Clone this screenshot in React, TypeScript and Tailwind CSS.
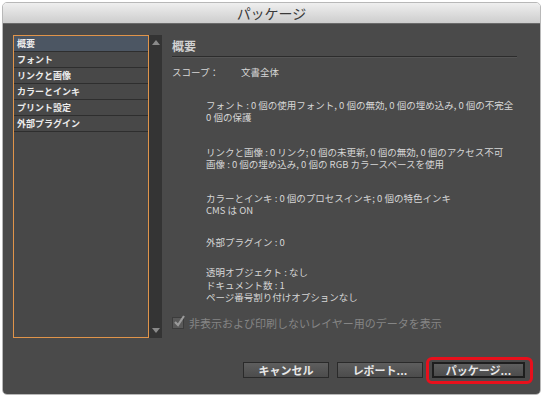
const jp = { fontFamily: '"Noto Sans CJK JP", "Liberation Sans", sans-serif' };

const items = ["概要", "フォント", "リンクと画像", "カラーとインキ", "プリント設定", "外部プラグイン"];

function Btn({ label, primary }: { label: string; primary?: boolean }) {
  return (
    <div
      className={
        "flex h-[16px] items-center justify-center bg-gradient-to-b from-[#5e5e5e] to-[#4c4c4c] text-[11px] font-bold leading-none text-[#e8e8e8] " +
        (primary ? "w-[93px] border-2 border-[#1e1e1e]" : "w-[86px] border border-[#2a2a2a]")
      }
    >
      {label}
    </div>
  );
}

export default function App() {
  return (
    <div className="h-[398px] w-[545px] bg-white p-[2px] pr-[4px] pb-[3px]" style={jp}>
      <div className="flex h-full w-full flex-col overflow-hidden rounded-[5px] border border-[#b8b8b8]">
        <div className="flex h-[21px] shrink-0 items-center justify-center border-b border-[#6a6a6a] bg-gradient-to-b from-[#efefef] to-[#cdcdcd] text-[14px] text-[#3a3a3a]">
          パッケージ
        </div>
        <div className="flex flex-1 flex-col bg-[#4a4a4a] pl-[10px] pt-[11px]">
          <div className="flex h-[303px]">
            <div className="flex w-[136px] flex-col border border-[#e0944a] bg-[#484848]">
              {items.map((t, i) => (
                <div
                  key={t}
                  className={
                    "h-[16px] border-b border-[#2e2e2e] pl-[3px] text-[9px] font-bold leading-[15px] text-[#ececec] " +
                    (i === 0 ? "bg-[#4c5663]" : "")
                  }
                >
                  {t}
                </div>
              ))}
            </div>
            <div className="flex w-[13px] flex-col items-center justify-between bg-[#343434] py-[5px]">
              <div className="h-0 w-0 border-x-[4px] border-b-[5px] border-x-transparent border-b-[#8a8a8a]" />
              <div className="h-0 w-0 border-x-[4px] border-t-[5px] border-x-transparent border-t-[#8a8a8a]" />
            </div>
            <div className="flex w-[355px] flex-col whitespace-nowrap pl-[10px] text-[9.5px] leading-[12.5px] text-[#d6d6d6]">
              <div className="pt-[3px] text-[12px] font-bold leading-[16px] text-[#d0d0d0]">概要</div>
              <div className="mt-[2px] h-[2px] border-t border-[#2c2c2c] border-b border-b-[#555]" />
              <div className="mt-[8px] flex">
                <span className="w-[69px]">スコープ：</span>
                <span>文書全体</span>
              </div>
              <div className="ml-[34px] mt-[20px]">
                <div>フォント : 0 個の使用フォント, 0 個の無効, 0 個の埋め込み, 0 個の不完全</div>
                <div>0 個の保護</div>
              </div>
              <div className="ml-[34px] mt-[22px]">
                <div>リンクと画像 : 0 リンク; 0 個の未更新, 0 個の無効, 0 個のアクセス不可</div>
                <div>画像 : 0 個の埋め込み, 0 個の RGB カラースペースを使用</div>
              </div>
              <div className="ml-[34px] mt-[21px]">
                <div>カラーとインキ : 0 個のプロセスインキ; 0 個の特色インキ</div>
                <div>CMS は ON</div>
              </div>
              <div className="ml-[34px] mt-[19px]">外部プラグイン : 0</div>
              <div className="ml-[34px] mt-[18px]">
                <div>透明オブジェクト : なし</div>
                <div>ドキュメント数 : 1</div>
                <div>ページ番号割り付けオプションなし</div>
              </div>
              <div className="mt-[12px] flex items-center gap-[5px]">
                <div className="relative h-[12px] w-[12px] border border-[#3c3c3c] bg-[#595959]">
                  <svg className="absolute -top-[3px] left-0" width="13" height="13" viewBox="0 0 13 13">
                    <path d="M2 7 L5 10 L11 1" fill="none" stroke="#9a9a9a" strokeWidth="2.2" />
                  </svg>
                </div>
                <span className="text-[11px] leading-[14px] text-[#858585]">非表示および印刷しないレイヤー用のデータを表示</span>
              </div>
            </div>
          </div>
          <div className="mr-[15px] mt-[24px] flex justify-end gap-[8px]">
            <Btn label="キャンセル" />
            <Btn label="レポート..." />
            <div className="relative ml-[1px]">
              <Btn label="パッケージ..." primary />
              <div className="absolute -bottom-[6px] -left-[6px] -right-[8px] -top-[5px] rounded-[6px] border-[3px] border-[#e8101c]" />
            </div>
          </div>
        </div>
      </div>
    </div>
  );
}
